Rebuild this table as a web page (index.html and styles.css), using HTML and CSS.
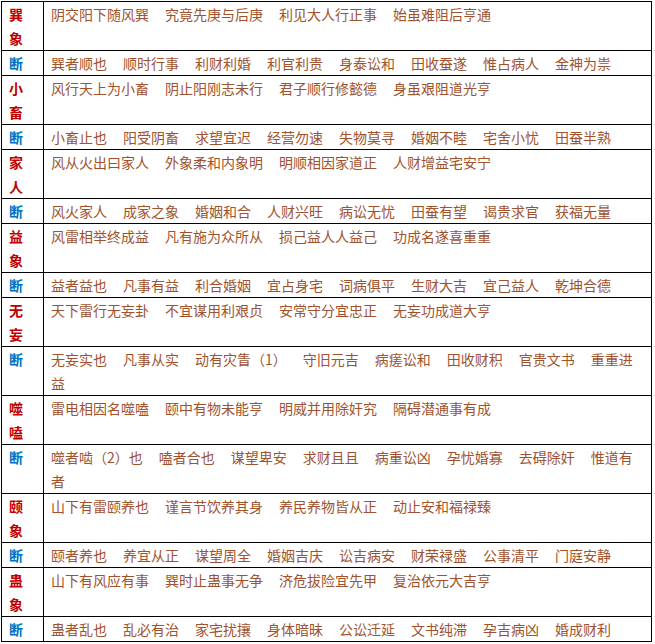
FILE: index.html
```html
<!DOCTYPE html>
<html lang="zh-CN">
<head>
<meta charset="utf-8">
<title>卦象</title>
<link rel="stylesheet" href="styles.css">
</head>
<body>
<table class="gua">
  <tr><td class="lab gname">巽<br>象</td><td class="txt">阴交阳下随风巽<i class="sp"></i>究竟先庚与后庚<i class="sp"></i>利见大人行正事<i class="sp"></i>始虽难阻后亨通</td></tr>
  <tr><td class="lab duan">断</td><td class="txt">巽者顺也<i class="sp"></i>顺时行事<i class="sp"></i>利财利婚<i class="sp"></i>利官利贵<i class="sp"></i>身泰讼和<i class="sp"></i>田收蚕遂<i class="sp"></i>惟占病人<i class="sp"></i>金神为祟</td></tr>
  <tr><td class="lab gname">小<br>畜</td><td class="txt">风行天上为小畜<i class="sp"></i>阴止阳刚志未行<i class="sp"></i>君子顺行修懿德<i class="sp"></i>身虽艰阻道光亨</td></tr>
  <tr><td class="lab duan">断</td><td class="txt">小畜止也<i class="sp"></i>阳受阴畜<i class="sp"></i>求望宜迟<i class="sp"></i>经营勿速<i class="sp"></i>失物莫寻<i class="sp"></i>婚姻不睦<i class="sp"></i>宅舍小忧<i class="sp"></i>田蚕半熟</td></tr>
  <tr><td class="lab gname">家<br>人</td><td class="txt">风从火出曰家人<i class="sp"></i>外象柔和内象明<i class="sp"></i>明顺相因家道正<i class="sp"></i>人财增益宅安宁</td></tr>
  <tr><td class="lab duan">断</td><td class="txt">风火家人<i class="sp"></i>成家之象<i class="sp"></i>婚姻和合<i class="sp"></i>人财兴旺<i class="sp"></i>病讼无忧<i class="sp"></i>田蚕有望<i class="sp"></i>谒贵求官<i class="sp"></i>获福无量</td></tr>
  <tr><td class="lab gname">益<br>象</td><td class="txt">风雷相举终成益<i class="sp"></i>凡有施为众所从<i class="sp"></i>损己益人人益己<i class="sp"></i>功成名遂喜重重</td></tr>
  <tr><td class="lab duan">断</td><td class="txt">益者益也<i class="sp"></i>凡事有益<i class="sp"></i>利合婚姻<i class="sp"></i>宜占身宅<i class="sp"></i>词病俱平<i class="sp"></i>生财大吉<i class="sp"></i>宜己益人<i class="sp"></i>乾坤合德</td></tr>
  <tr><td class="lab gname">无<br>妄</td><td class="txt">天下雷行无妄卦<i class="sp"></i>不宜谋用利艰贞<i class="sp"></i>安常守分宜忠正<i class="sp"></i>无妄功成道大亨</td></tr>
  <tr><td class="lab duan">断</td><td class="txt">无妄实也<i class="sp"></i>凡事从实<i class="sp"></i>动有灾眚（1）<i class="sp"></i>守旧元吉<i class="sp"></i>病瘥讼和<i class="sp"></i>田收财积<i class="sp"></i>官贵文书<i class="sp"></i>重重进益</td></tr>
  <tr><td class="lab gname">噬<br>嗑</td><td class="txt">雷电相因名噬嗑<i class="sp"></i>颐中有物未能亨<i class="sp"></i>明威并用除奸究<i class="sp"></i>隔碍潜通事有成</td></tr>
  <tr><td class="lab duan">断</td><td class="txt">噬者啮（2）也<i class="sp"></i>嗑者合也<i class="sp"></i>谋望卑安<i class="sp"></i>求财且且<i class="sp"></i>病重讼凶<i class="sp"></i>孕忧婚寡<i class="sp"></i>去碍除奸<i class="sp"></i>惟道有者</td></tr>
  <tr><td class="lab gname">颐<br>象</td><td class="txt">山下有雷颐养也<i class="sp"></i>谨言节饮养其身<i class="sp"></i>养民养物皆从正<i class="sp"></i>动止安和福禄臻</td></tr>
  <tr><td class="lab duan">断</td><td class="txt">颐者养也<i class="sp"></i>养宜从正<i class="sp"></i>谋望周全<i class="sp"></i>婚姻吉庆<i class="sp"></i>讼吉病安<i class="sp"></i>财荣禄盛<i class="sp"></i>公事清平<i class="sp"></i>门庭安静</td></tr>
  <tr><td class="lab gname">蛊<br>象</td><td class="txt">山下有风应有事<i class="sp"></i>巽时止蛊事无争<i class="sp"></i>济危拔险宜先甲<i class="sp"></i>复治依元大吉亨</td></tr>
  <tr><td class="lab duan">断</td><td class="txt">蛊者乱也<i class="sp"></i>乱必有治<i class="sp"></i>家宅扰攘<i class="sp"></i>身体暗昧<i class="sp"></i>公讼迁延<i class="sp"></i>文书纯滞<i class="sp"></i>孕吉病凶<i class="sp"></i>婚成财利</td></tr>
</table>
</body>
</html>
```
FILE: styles.css
```css
html, body {
  margin: 0;
  padding: 0;
  background: #ffffff;
}

body {
  font-family: "Noto Sans CJK SC", "Noto Sans", sans-serif;
  font-size: 14px;
  line-height: 24px;
}

.gua {
  border-collapse: collapse;
  border: 1px solid #000;
  margin: 1px 0 0 1px;
  width: 651px;
  table-layout: fixed;
}

.gua td {
  border: 1px solid #000;
  padding: 0 7px;
  vertical-align: top;
  line-height: 24px;
}

.lab {
  width: 27px;
  font-weight: bold;
}

.gname {
  color: #c00000;
}

.duan {
  color: #0070c0;
}

.txt {
  color: #a0522d;
}

.sp {
  display: inline-block;
  width: 16px;
  height: 1px;
}
```
